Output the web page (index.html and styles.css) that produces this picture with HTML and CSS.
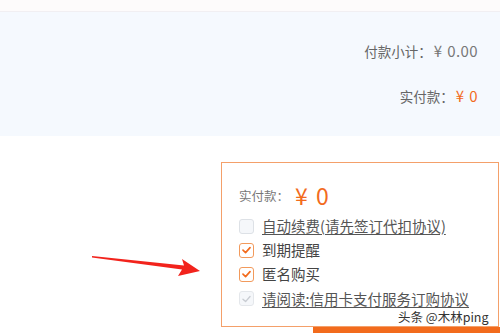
FILE: index.html
```html
<!DOCTYPE html>
<html>
<head>
<meta charset="utf-8">
<link rel="stylesheet" href="styles.css">
</head>
<body>
<div class="page">
  <div class="topbar"></div>
  <div class="summary">
    <div class="sum-row sum-first"><span class="lbl">付款小计：</span><span class="num amt">¥ 0.00</span></div>
    <div class="sum-row sum-second"><span class="lbl">实付款：</span><span class="num orange">¥ 0</span></div>
  </div>
  <div class="lower">
    <div class="paybox">
      <div class="pay-line"><span class="pay-label">实付款：</span><span class="pay-amt">¥ 0</span></div>
      <div class="opts">
        <div class="opt"><span class="cb cb-off"></span><span class="txt ul">自动续费(请先签订代扣协议)</span></div>
        <div class="opt"><span class="cb cb-on"><svg viewBox="0 0 14 14" width="14" height="14"><path d="M3.2 7.2 L6 9.8 L10.8 4.4" fill="none" stroke="#f26b1d" stroke-width="1.8" stroke-linecap="round" stroke-linejoin="round"/></svg></span><span class="txt">到期提醒</span></div>
        <div class="opt"><span class="cb cb-on"><svg viewBox="0 0 14 14" width="14" height="14"><path d="M3.2 7.2 L6 9.8 L10.8 4.4" fill="none" stroke="#f26b1d" stroke-width="1.8" stroke-linecap="round" stroke-linejoin="round"/></svg></span><span class="txt">匿名购买</span></div>
        <div class="opt"><span class="cb cb-dis"><svg viewBox="0 0 14 14" width="14" height="14"><path d="M3.2 7.2 L6 9.8 L10.8 4.4" fill="none" stroke="#c8ccd2" stroke-width="1.5" stroke-linecap="round" stroke-linejoin="round"/></svg></span><span class="txt ul">请阅读:信用卡支付服务订购协议</span></div>
      </div>
    </div>
    <div class="btnbar"></div>
    <svg class="arrow" width="120" height="30" viewBox="0 0 120 30"><path d="M0 4 L92 13.5 L90 7 L108 19 L86 24 L90 17.5 L0 5.5 Z" fill="#f2231c"/></svg>
    <div class="watermark">头条 @木林ping</div>
  </div>
</div>
</body>
</html>
```

FILE: styles.css
```css
* { box-sizing: border-box; }
html, body { margin: 0; padding: 0; background: #fff; }
body {
  font-family: "Noto Sans CJK SC", "Noto Sans", sans-serif;
  width: 500px; height: 333px; overflow: hidden;
}
.page { position: relative; width: 500px; height: 333px; }
.topbar {
  height: 12px;
  background: #fdfbfb;
  border-bottom: 1px solid #f1eff2;
}
.summary {
  height: 124px;
  background: #f5f9fe;
  padding-right: 22px;
  display: flex;
  flex-direction: column;
  align-items: flex-end;
}
.sum-row { display: flex; align-items: baseline; color: #666; line-height: 20px; }
.lbl { font-size: 13.5px; }
.num { font-size: 15px; margin-left: 2px; letter-spacing: 0.4px; word-spacing: 1px; }
.sum-first { margin-top: 29px; }
.sum-second { margin-top: 25px; }
.amt { color: #777; }
.orange { color: #f26b1d; }
.lower {
  position: relative;
  height: 197px;
  padding-top: 26px;
  padding-left: 221px;
}
.paybox {
  width: 278px;
  height: 165px;
  border: 1.5px solid #f4a06a;
  padding: 20px 0 0 17px;
}
.pay-line { display: flex; align-items: center; height: 24px; }
.pay-label { font-size: 12.5px; color: #777; }
.pay-amt { font-size: 23px; line-height: 24px; color: #f26b1d; margin-left: 6px; word-spacing: 3px; }
.opts { margin-top: 7px; display: flex; flex-direction: column; }
.opt { display: flex; align-items: center; height: 24.2px; }
.cb {
  width: 15px; height: 15px;
  border-radius: 3px;
  margin-right: 8px;
  display: inline-flex; align-items: center; justify-content: center;
  flex-shrink: 0;
}
.cb-off { border: 1px solid #dde1e6; background: #f5f7fa; }
.cb-on { border: 1.5px solid #f29a5c; background: #fff; }
.cb-dis { border: 1px solid #e4e7eb; background: #f5f7fa; }
.txt { font-size: 14.5px; color: #444; line-height: 16px; }
.ul { text-decoration: underline; text-underline-offset: 2px; color: #555; }
.btnbar {
  margin-left: 92px;
  height: 6px;
  background: #f26b1d;
}
.arrow {
  position: absolute;
  left: 92px;
  top: 116px;
}
.watermark {
  position: absolute;
  left: 398px;
  top: 171px;
  font-size: 12.5px;
  color: #333;
  text-shadow: 0 0 2px #fff, 0 0 2px #fff, 0 0 2px #fff;
}
```
